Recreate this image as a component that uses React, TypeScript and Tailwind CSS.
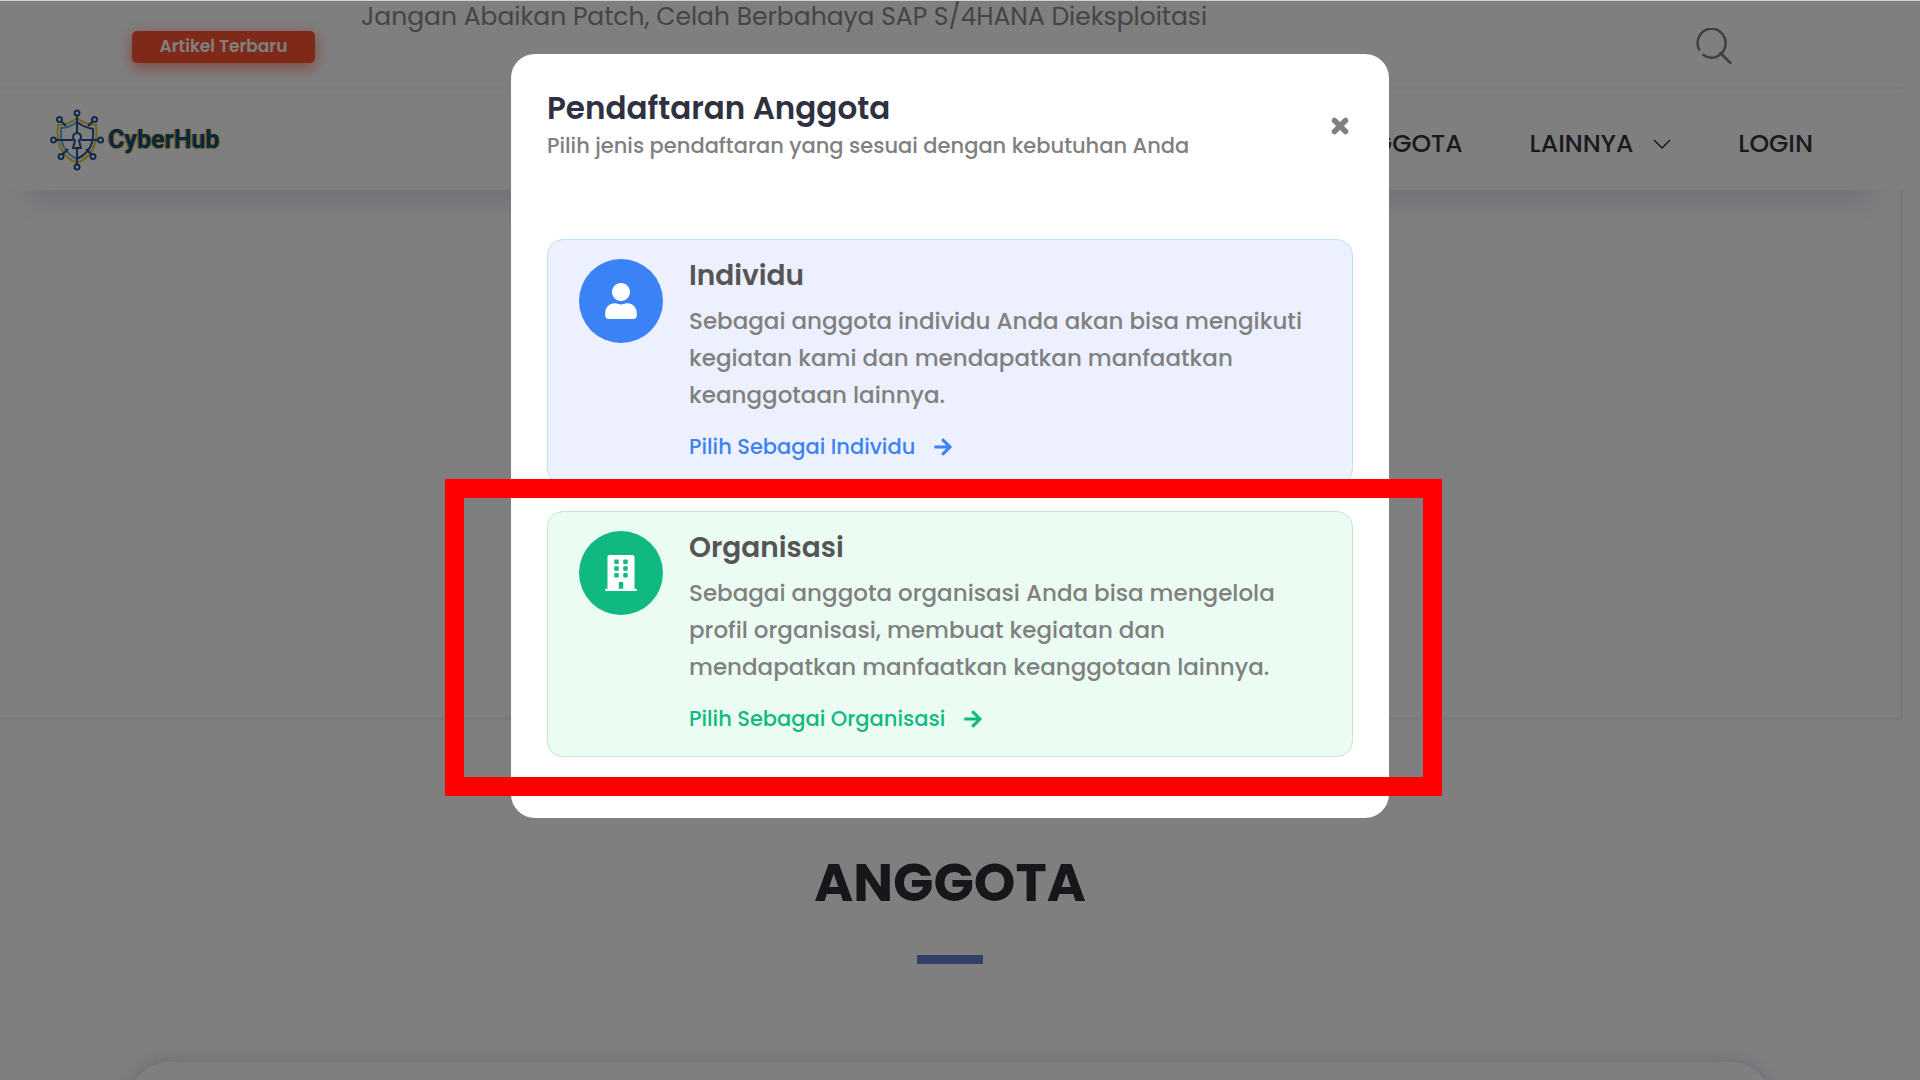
import { useState } from 'react'
import { FaArrowRight, FaBuilding, FaUser } from 'react-icons/fa'

const options = [
  {
    id: 'individu',
    title: 'Individu',
    description:
      'Sebagai anggota individu Anda akan bisa mengikuti kegiatan kami dan mendapatkan manfaatkan keanggotaan lainnya.',
    action: 'Pilih Sebagai Individu',
    icon: FaUser,
    card: 'border-[#bfdfff] bg-[#edf1ff]',
    circle: 'bg-[#3b82f6]',
    link: 'text-[#3b82f6]',
  },
  {
    id: 'organisasi',
    title: 'Organisasi',
    description:
      'Sebagai anggota organisasi Anda bisa mengelola profil organisasi, membuat kegiatan dan mendapatkan manfaatkan keanggotaan lainnya.',
    action: 'Pilih Sebagai Organisasi',
    icon: FaBuilding,
    card: 'border-[#c3e6cb] bg-[#ebfdf3]',
    circle: 'bg-[#10b981]',
    link: 'text-[#10b981]',
  },
]

function Logo() {
  return (
    <a href="#beranda" className="flex items-center gap-1">
      <svg viewBox="0 0 54 62" className="h-[62px] w-[54px]" fill="none">
        {/* shield */}
        <path d="M27 9 C21 14 14 16 8 16 C6 32 10 47 27 54 C44 47 48 32 46 16 C40 16 33 14 27 9Z" stroke="#f2c230" strokeWidth="2" />
        <path d="M27 13 C22 17 16 19 11 19 C10 33 13 43 27 50" stroke="#4cb4e6" strokeWidth="2" />
        <path d="M27 13 C32 17 38 19 43 20 C44 33 41 43 27 50" stroke="#2a5298" strokeWidth="2" />
        {/* circuit lines */}
        <g stroke="#2a5298" strokeWidth="2">
          <path d="M27 7V24M27 38V55M6 31H23M31 31H48M11 12L16 17M43 12L38 17M12 46L18 40M42 46L36 40" />
          <circle cx="27" cy="4" r="2.5" />
          <circle cx="27" cy="58" r="2.5" />
          <circle cx="3.5" cy="31" r="2.5" />
          <circle cx="50.5" cy="31" r="2.5" />
          <circle cx="9.5" cy="10.5" r="2.5" />
          <circle cx="44.5" cy="10.5" r="2.5" />
          <circle cx="11" cy="47.5" r="2.5" />
          <circle cx="43" cy="47.5" r="2.5" />
          <path d="M25 31.5 A4 4 0 1 1 29 31.5 L31 39 H23Z" />
        </g>
      </svg>
      <span className="font-['Roboto',sans-serif] text-[25px] leading-8 font-bold text-[#0b4a80] [text-shadow:1px_0_1px_#d9b52c,-1px_0_1px_#d9b52c,0_1px_1px_#d9b52c]">
        CyberHub
      </span>
    </a>
  )
}

function SearchIcon() {
  return (
    <svg viewBox="0 0 36 36" className="h-9 w-9" fill="none" stroke="currentColor" strokeWidth="2.5" strokeLinecap="round">
      <path d="M3 21.5 A14 14.5 0 1 1 7.5 27" />
      <path d="M24.5 25 L34.5 35" />
    </svg>
  )
}

export default function App() {
  const [open, setOpen] = useState(true)

  return (
    <div className="relative h-screen overflow-hidden border-t border-[#ccd4d1] bg-white font-['Poppins','Inter',sans-serif]">
      <div className="mr-5">
        <div className="flex h-[88px] items-start border-b-2 border-[#f2f2f2] pr-[168px] pl-[132px]">
          <span className="mt-[30px] flex h-8 w-[183px] items-center justify-center rounded-[5px] bg-[#ff5533] text-[17px] font-semibold text-white shadow-[0_4px_15px_rgba(255,85,51,0.7)]">
            Artikel Terbaru
          </span>
          <a href="#artikel" className="ml-[46px] flex-1 text-[25px] leading-8 text-[#8a8a8a]">
            Jangan Abaikan Patch, Celah Berbahaya SAP S/4HANA Dieksploitasi
          </a>
          <button type="button" aria-label="Cari" className="mt-[27px] text-[#808080]">
            <SearchIcon />
          </button>
        </div>

        <nav className="flex h-[101px] items-center justify-between pr-[87px] pl-[50px] text-[25px] font-medium text-[#34353d] shadow-[0_40px_30px_-30px_rgba(70,80,170,0.18)]">
          <Logo />
          <div className="flex items-center gap-[67px] pt-2">
            <a href="#anggota">ANGGOTA</a>
            <a href="#lainnya" className="flex items-center gap-5">
              LAINNYA
              <svg viewBox="0 0 18 10" className="h-[10px] w-[18px]" fill="none" stroke="currentColor" strokeWidth="1.5">
                <path d="M1 1L9 9L17 1" />
              </svg>
            </a>
            <a href="#login">LOGIN</a>
          </div>
        </nav>
      </div>

      <section className="mr-[17px] h-[530px] border-r-3 border-b-3 border-[#f2f2f2]" />

      <section id="anggota" className="mr-5 pt-[125px] text-center">
        <h2 className="text-[53px] leading-[76px] font-bold text-[#2d2f36]">ANGGOTA</h2>
        <div className="mx-auto mt-[34px] h-[9px] w-[66px] bg-[#6680cf]" />
        <div className="mx-[129px] mt-[98px] h-40 rounded-[40px] bg-white shadow-[0_0_18px_rgba(70,95,170,0.28)]" />
      </section>

      {open && (
        <div className="absolute inset-0 flex items-start justify-center bg-black/50 pt-[53px] pr-5">
          <div role="dialog" aria-labelledby="daftar" className="w-[878px] rounded-3xl bg-white px-9 pt-[34px] pb-[61px]">
            <header className="flex items-center justify-between">
              <div>
                <h1 id="daftar" className="text-[31px] leading-10 font-semibold text-[#2f3140]">
                  Pendaftaran Anggota
                </h1>
                <p className="text-[21px] leading-9 font-medium text-[#808080]">
                  Pilih jenis pendaftaran yang sesuai dengan kebutuhan Anda
                </p>
              </div>
              <button type="button" aria-label="Tutup" onClick={() => setOpen(false)} className="mr-1 text-[#808080]">
                <svg viewBox="0 0 18 18" className="h-[18px] w-[18px]" stroke="currentColor" strokeWidth="5.5" strokeLinecap="round">
                  <path d="M3.5 3.5L14.5 14.5M14.5 3.5L3.5 14.5" />
                </svg>
              </button>
            </header>

            <div className="mt-[75px] flex flex-col gap-[26px]">
              {options.map(({ icon: Icon, ...option }) => (
                <article key={option.id} className={`flex gap-[26px] rounded-2xl border px-[31px] pt-[19px] pb-[21px] ${option.card}`}>
                  <div className={`flex h-[84px] w-[84px] shrink-0 items-center justify-center rounded-full text-white ${option.circle}`}>
                    <Icon className="h-9 w-9" />
                  </div>
                  <div className="flex-1">
                    <h2 className="text-[28px] leading-[34px] font-semibold text-[#555555]">{option.title}</h2>
                    <p className="mt-[10px] text-[23px] leading-[37px] font-medium text-[#808080]">{option.description}</p>
                    <a href={`#${option.id}`} className={`mt-[17px] flex items-center gap-[18px] text-[21px] leading-8 font-medium ${option.link}`}>
                      {option.action}
                      <FaArrowRight className="h-5 w-5" />
                    </a>
                  </div>
                </article>
              ))}
            </div>
          </div>
        </div>
      )}

      {/* highlight frame around the organisasi option */}
      <div className="pointer-events-none absolute inset-x-0 top-[478px] flex justify-center pr-[33px]">
        <div className="h-[317px] w-[997px] border-[19px] border-[#ff0000]" />
      </div>
    </div>
  )
}
